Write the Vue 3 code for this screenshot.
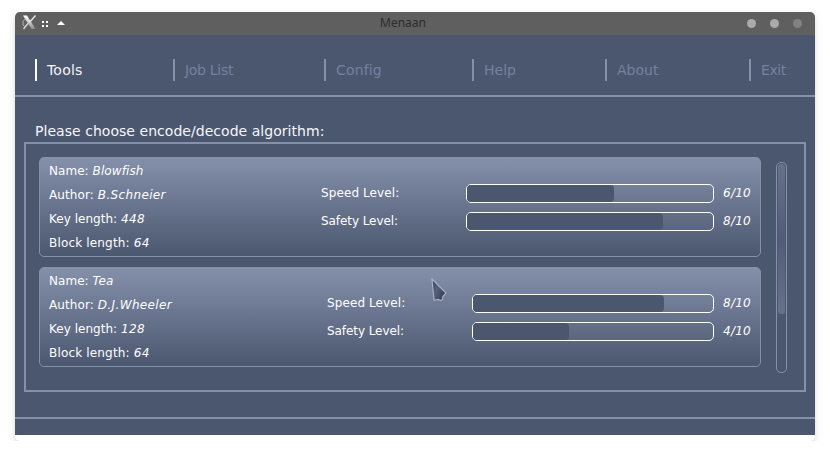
<script setup>
const tabs = [
  { text: 'Tools', tracking: 0.2 },
  { text: 'Job List', tracking: -0.3 },
  { text: 'Config', tracking: 0.15 },
  { text: 'Help', tracking: 0 },
  { text: 'About', tracking: 0 },
  { text: 'Exit', tracking: -0.4 },
]

const ciphers = [
  { name: 'Blowfish', author: 'B.Schneier', key: 448, block: 64, speed: 6, safety: 8 },
  { name: 'Tea', author: 'D.J.Wheeler', key: 128, block: 64, speed: 8, safety: 4, narrow: true },
]

const details = (c) => [
  { label: 'Name:', value: c.name, labelTracking: 0.05, tracking: 0.1 },
  { label: 'Author:', value: c.author, labelTracking: 0.1, tracking: 0.35 },
  { label: 'Key length:', value: c.key, labelTracking: 0.03, tracking: 0.3 },
  { label: 'Block length:', value: c.block, labelTracking: 0.17, tracking: 0.3 },
]

const levels = (c) => [
  { label: 'Speed Level:', value: c.speed, tracking: 0.1 },
  { label: 'Safety Level:', value: c.safety, tracking: -0.07 },
]

const spacing = (px) => ({ letterSpacing: px + 'px' })
</script>

<template>
  <div class="window">
    <header class="titlebar">
      <svg class="logo" width="14" height="15" viewBox="0 0 14 15">
        <defs>
          <linearGradient id="metal" x1="0" y1="0" x2="0" y2="1">
            <stop offset="0" stop-color="#fff" />
            <stop offset="0.4" stop-color="#d8d8d8" />
            <stop offset="1" stop-color="#8a8a8a" />
          </linearGradient>
        </defs>
        <path d="M3.5 3.5Q0 6 1 10Q2 12 4 11" fill="none" stroke="#b4b4b4" stroke-width="1" />
        <path d="M1 0.5H5L13.5 14H9.5Z" fill="url(#metal)" />
        <path d="M13.5 0.5L7.6 7.2" stroke="#ececec" stroke-width="1.4" />
        <path d="M6.2 8.2L1.5 14" stroke="#d4d4d4" stroke-width="1.4" />
      </svg>
      <svg class="dots" width="6" height="6" viewBox="0 0 6 6" fill="#fff">
        <rect width="2" height="2" /><rect x="4" width="2" height="2" />
        <rect y="4" width="2" height="2" /><rect x="4" y="4" width="2" height="2" />
      </svg>
      <svg class="shade" width="8" height="4" viewBox="0 0 8 4"><path d="M4 0L8 4H0Z" fill="#fff" /></svg>
      <span class="title">Menaan</span>
      <span class="buttons"><i></i><i></i><i class="dim"></i></span>
    </header>

    <main class="body">
      <nav class="tabs">
        <a
          v-for="(tab, i) in tabs"
          :key="tab.text"
          class="tab"
          :class="{ active: i === 0 }"
          :style="spacing(tab.tracking)"
        >{{ tab.text }}</a>
      </nav>
      <h1 class="prompt">Please choose encode/decode algorithm:</h1>
      <section class="panel">
        <div class="list">
          <article v-for="c in ciphers" :key="c.name" class="card">
            <div class="info">
              <div v-for="d in details(c)" :key="d.label">
                <span :style="spacing(d.labelTracking)">{{ d.label }}&nbsp;</span><em :style="spacing(d.tracking)">{{ d.value }}</em>
              </div>
            </div>
            <div class="levels" :class="{ narrow: c.narrow }">
              <div v-for="l in levels(c)" :key="l.label" class="level">
                <span class="label" :style="spacing(l.tracking)">{{ l.label }}</span>
                <div class="bar"><div class="fill" :style="{ width: l.value * 10 + '%' }"></div></div>
                <em class="score">{{ l.value }}/10</em>
              </div>
            </div>
          </article>
        </div>
        <div class="scroll"><div class="thumb"></div></div>
      </section>
      <footer class="foot"></footer>
    </main>

    <svg class="pointer" width="17" height="26" viewBox="0 0 17 26">
      <defs>
        <linearGradient id="arrow" x1="0" y1="0" x2="1" y2="0.6">
          <stop offset="0" stop-color="#353e51" />
          <stop offset="0.45" stop-color="#58627d" />
          <stop offset="1" stop-color="#353d50" />
        </linearGradient>
      </defs>
      <path d="M1 1L15 15L11.8 18.5L11.5 21.5L9.5 22.5L7.5 21.5L3 22.3Z" fill="url(#arrow)" stroke="#a9b0c4" stroke-width="1.2" />
    </svg>
  </div>
</template>

<style>
body {
  background: #fff;
}
</style>

<style scoped>
.window {
  position: relative;
  box-sizing: border-box;
  width: 800px;
  height: 429px;
  margin: 12px 15px 0;
  border-radius: 5px;
  background: #fff;
  box-shadow: 0 2px 4px rgba(0, 0, 0, 0.12), 0 3px 12px rgba(0, 0, 0, 0.05);
  font-family: "DejaVu Sans", sans-serif;
  color: #fff;
}
.titlebar {
  display: grid;
  grid-template-columns: 20px 15px 323px 53px 1fr;
  height: 23px;
  padding-left: 7px;
  border-radius: 5px 5px 0 0;
  background: #5f5f5f;
}
.logo {
  margin-top: 3px;
}
.dots {
  margin-top: 9px;
}
.shade {
  margin-top: 9px;
}
.title {
  font-family: "Noto Sans", sans-serif;
  font-size: 12px;
  line-height: 22px;
  color: #2d2d2d;
}
.buttons {
  display: flex;
  justify-content: flex-end;
  gap: 14px;
  padding: 7px 13px 0 0;
}
.buttons i {
  width: 9px;
  height: 9px;
  border-radius: 50%;
  background: #aaa;
}
.buttons .dim {
  background: #828282;
}
.body {
  height: 400px;
  background: #4b566f;
}
.tabs {
  box-sizing: border-box;
  display: grid;
  grid-template-columns: 138px 151px 148px 133px 144px 1fr;
  height: 62px;
  padding: 24px 0 0 20px;
  border-bottom: 2px solid #8590ab;
}
.tab {
  height: 22px;
  padding-left: 10px;
  border-left: 2px solid #8590ab;
  font-size: 14px;
  line-height: 22px;
  color: #7581a0;
}
.tab.active {
  border-color: #fff;
  color: #f4f5f7;
}
.prompt {
  height: 22px;
  margin: 0;
  padding: 23px 0 0 20px;
  font-size: 14px;
  font-weight: 400;
  line-height: 22px;
  letter-spacing: 0.04px;
  color: #f6f7f9;
}
.panel {
  box-sizing: border-box;
  display: flex;
  justify-content: space-between;
  width: 782px;
  height: 250px;
  margin-left: 9px;
  padding: 13px 17px 0 13px;
  border: 2px solid #8590ab;
}
.list {
  display: flex;
  flex-direction: column;
  gap: 10px;
  width: 722px;
}
.card {
  box-sizing: border-box;
  display: flex;
  justify-content: space-between;
  height: 100px;
  padding: 1px 10px 0 9px;
  border: 1px solid #8590ab;
  border-radius: 5px;
  background: linear-gradient(#8590ab, #4b566f) border-box;
  font-size: 12px;
  line-height: 24px;
}
.levels {
  display: flex;
  flex-direction: column;
  gap: 9px;
  width: 429px;
  padding-top: 25px;
}
.levels.narrow {
  width: 423px;
}
.level {
  display: flex;
  height: 19px;
  line-height: 19px;
}
.label {
  width: 145px;
}
.bar {
  box-sizing: border-box;
  flex: 1;
  height: 19px;
  padding-right: 1px;
  border: 1px solid #fff;
  border-radius: 5px;
}
.fill {
  height: 17px;
  border-radius: 4px;
  background: #4b566f;
}
.score {
  width: 27px;
  padding-left: 9px;
  letter-spacing: 0.25px;
}
.scroll {
  box-sizing: border-box;
  width: 11px;
  height: 211px;
  margin-top: 5px;
  padding: 1px;
  border: 1px solid #8590ab;
  border-radius: 5px;
}
.thumb {
  height: 150px;
  border-radius: 3px;
  background: linear-gradient(#67718b, #535b78 50%, #67718b);
}
.foot {
  height: 16px;
  margin-top: 25px;
  border-top: 2px solid #8590ab;
}
.pointer {
  position: absolute;
  left: 416px;
  top: 266px;
}
</style>
